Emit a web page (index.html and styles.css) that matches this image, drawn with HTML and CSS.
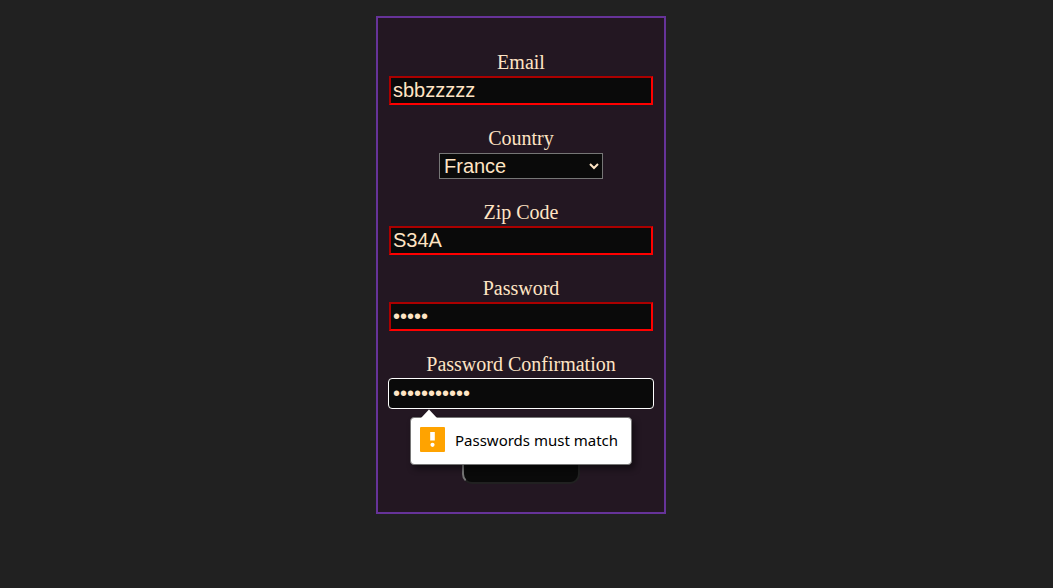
FILE: index.html
```
<!DOCTYPE html>
<html lang="en">
<head>
<meta charset="utf-8">
<meta name="viewport" content="width=device-width, initial-scale=1">
<title>Form validation</title>
<link rel="stylesheet" href="styles.css">
</head>
<body>
<form class="form" novalidate>
  <div class="field">
    <label for="email">Email</label>
    <input class="control invalid" id="email" type="email" value="sbbzzzzz">
  </div>
  <div class="field">
    <label for="country">Country</label>
    <select class="select" id="country"><option>France</option></select>
  </div>
  <div class="field">
    <label for="zip">Zip Code</label>
    <input class="control invalid" id="zip" type="text" value="S34A">
  </div>
  <div class="field">
    <label for="password">Password</label>
    <input class="control invalid" id="password" type="password" value="abcde">
  </div>
  <div class="field">
    <label for="confirm">Password Confirmation</label>
    <input class="control active" id="confirm" type="password" value="abcdefghijk" aria-describedby="confirm-error">
    <div class="bubble" id="confirm-error" role="alert">
      <svg class="arrow" width="16" height="9" viewBox="0 0 16 9" aria-hidden="true"><path d="M0 9L8 0.5L16 9Z" fill="#fff"/></svg>
      <svg class="warning" width="25" height="25" viewBox="0 0 25 25" aria-hidden="true"><rect width="25" height="25" rx="1" fill="#ffa300"/><path d="M10.2 5h4.6v8.5h-4.6z" fill="#fff"/><circle cx="12.5" cy="17.8" r="2.1" fill="#fff"/></svg>
      <span>Passwords must match</span>
    </div>
  </div>
  <button class="submit" type="submit" aria-label="Submit"></button>
</form>
</body>
</html>
```
FILE: styles.css
```
* { box-sizing: border-box; }

body {
  margin: 0;
  padding: 16px 11px 16px 0;
  display: flex;
  justify-content: center;
  background: #212121;
  color: #ffe4c4;
  font: 20px/23px "Liberation Serif", serif;
}

.form {
  width: 290px;
  padding: 33px 11px 28px;
  display: flex;
  flex-direction: column;
  align-items: center;
  gap: 22px;
  border: 2px solid #663399;
  background: #231722;
}

.field {
  position: relative;
  width: 100%;
  display: flex;
  flex-direction: column;
  align-items: center;
  gap: 2px;
}

.control,
.select {
  background: #0a0a0a;
  color: #ffe4c4;
  font: 20px/23px "Liberation Sans", sans-serif;
}

.control {
  width: 100%;
  height: 29px;
  padding: 1px 2px;
  border: 2px inset;
  outline: none;
}

.invalid { border-color: #ff0000; }

.active {
  width: calc(100% + 2px);
  height: 31px;
  padding: 3px 4px;
  border: 1px solid #fff;
  border-radius: 4px;
}

.select {
  width: 164px;
  height: 26px;
  margin-top: 1px;
  border: 1px solid #767676;
  border-radius: 0;
}

.bubble {
  position: absolute;
  top: calc(100% + 8px);
  left: 21px;
  width: max-content;
  min-width: 222px;
  height: 48px;
  padding: 9px;
  display: flex;
  gap: 10px;
  border: 1px solid #767676;
  border-radius: 4px;
  background: #fff;
  color: #000;
  box-shadow: 3px 4px 6px rgba(0, 0, 0, 0.45);
  font: 15px/27px "Noto Sans", sans-serif;
}

.arrow {
  position: absolute;
  top: -9px;
  left: 10px;
}

.submit {
  width: 118px;
  height: 53px;
  border: 2px solid;
  border-color: #767676 #212121 #212121 #767676;
  border-radius: 10px;
  background: #0a0a0a;
}
```
